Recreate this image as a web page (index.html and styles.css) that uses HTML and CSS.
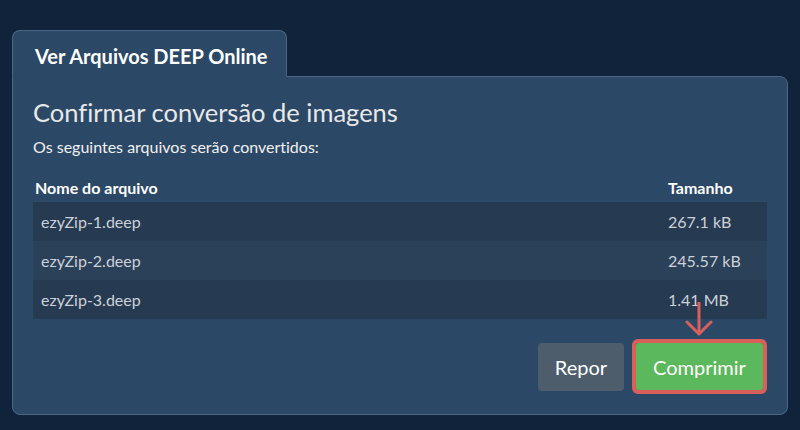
FILE: index.html
```html
<!DOCTYPE html>
<html lang="pt">
<head>
<meta charset="utf-8">
<title>Ver Arquivos DEEP Online</title>
<link rel="stylesheet" href="styles.css">
</head>
<body>
<div class="wrap">
  <div class="tab">Ver Arquivos DEEP Online</div>
  <div class="panel">
    <h1 class="title">Confirmar conversão de imagens</h1>
    <p class="subtitle">Os seguintes arquivos serão convertidos:</p>
    <div class="table">
      <div class="row head">
        <div class="c-name">Nome do arquivo</div>
        <div class="c-size">Tamanho</div>
      </div>
      <div class="row odd">
        <div class="c-name">ezyZip-1.deep</div>
        <div class="c-size">267.1 kB</div>
      </div>
      <div class="row even">
        <div class="c-name">ezyZip-2.deep</div>
        <div class="c-size">245.57 kB</div>
      </div>
      <div class="row odd">
        <div class="c-name">ezyZip-3.deep</div>
        <div class="c-size">1.41 MB</div>
      </div>
    </div>
    <div class="actions">
      <button class="btn btn-reset">Repor</button>
      <div class="go-wrap">
        <svg class="arrow" width="28" height="34" viewBox="0 0 28 34" aria-hidden="true">
          <line x1="14" y1="1" x2="14" y2="31" stroke="#d9605a" stroke-width="3" stroke-linecap="round"/>
          <polyline points="2,20 14,32 26,20" fill="none" stroke="#d9605a" stroke-width="3" stroke-linecap="round" stroke-linejoin="round"/>
        </svg>
        <button class="btn btn-go">Comprimir</button>
      </div>
    </div>
  </div>
</div>
</body>
</html>
```
FILE: styles.css
```css
* { box-sizing: border-box; }
html, body { margin: 0; padding: 0; }
body {
  background: #11233a;
  font-family: Lato, "Open Sans", sans-serif;
  font-variant-ligatures: none;
  color: #ebebeb;
  width: 800px;
  height: 430px;
  overflow: hidden;
}
.wrap {
  padding: 30px 12px 0 12px;
}
.tab {
  position: relative;
  z-index: 1;
  width: 275px;
  height: 47px;
  margin-bottom: -1px;
  background: #2c4867;
  border: 1px solid #4c6685;
  border-bottom: 1px solid #2c4867;
  border-radius: 8px 8px 0 0;
  padding: 13px 0 0 22px;
  font-size: 20px;
  line-height: 24px;
  font-weight: 700;
  color: #ffffff;
}
.panel {
  width: 776px;
  height: 339px;
  background: #2c4867;
  border: 1px solid #4c6685;
  border-radius: 0 8px 8px 8px;
  padding: 19px 20px 0 20px;
}
.title {
  margin: 0;
  font-size: 25.5px;
  line-height: 32px;
  font-weight: 400;
  color: #e8e8e8;
}
.subtitle {
  margin: 9px 0 0 0;
  font-size: 16px;
  line-height: 20px;
  color: #f0f0f0;
}
.table {
  margin-top: 19px;
  width: 734px;
}
.row {
  display: grid;
  grid-template-columns: 627px 107px;
  font-size: 16px;
  line-height: 20px;
}
.row > div {
  padding: 10px 8px 9px 8px;
}
.row.head {
  font-weight: 700;
  color: #ffffff;
}
.row.head > div {
  padding: 2px 8px 4px 8px;
}
.row.head .c-name { padding-left: 2px; }
.row.odd { background: #263a52; }
.row.even { background: #2b4059; }
.row.odd > div, .row.even > div { color: #ccd1d8; }
.actions {
  display: flex;
  justify-content: flex-end;
  gap: 12px;
  margin-top: 24px;
  width: 730px;
}
.go-wrap {
  position: relative;
}
.arrow {
  position: absolute;
  left: 49px;
  top: -41px;
}
.btn {
  border: none;
  font-family: Lato, "Open Sans", sans-serif;
  font-size: 20px;
  line-height: 24px;
  color: #ffffff;
  border-radius: 4px;
  cursor: pointer;
}
.btn-reset {
  width: 86px;
  height: 48px;
  background: #4e5d6c;
}
.btn-go {
  width: 127px;
  height: 47px;
  background: #5cb85c;
  outline: 4px solid #d9605a;
  border-radius: 2px;
}
```
